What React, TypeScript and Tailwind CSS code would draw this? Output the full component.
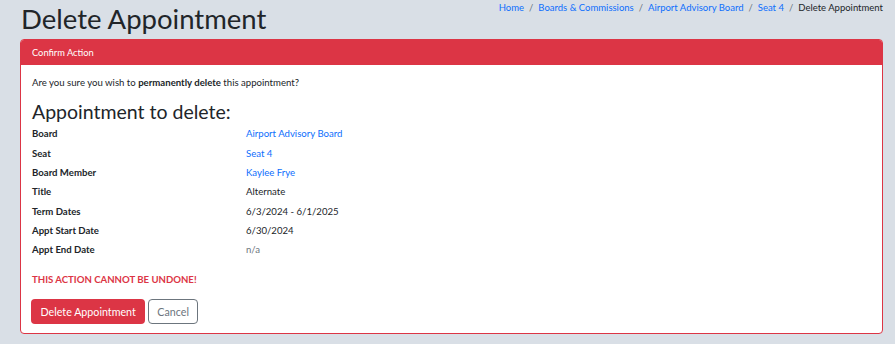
import React from "react";

const rows: { label: string; value: string; link?: boolean; muted?: boolean }[] = [
  { label: "Board", value: "Airport Advisory Board", link: true },
  { label: "Seat", value: "Seat 4", link: true },
  { label: "Board Member", value: "Kaylee Frye", link: true },
  { label: "Title", value: "Alternate" },
  { label: "Term Dates", value: "6/3/2024 - 6/1/2025" },
  { label: "Appt Start Date", value: "6/30/2024" },
  { label: "Appt End Date", value: "n/a", muted: true },
];

export default function App() {
  return (
    <div
      className="min-h-[344px] w-full bg-[#d9dfe6] text-[#212529] pl-[20px] pr-[12px] pb-[10px]"
      style={{ fontFamily: 'Lato, "Open Sans", sans-serif' }}
    >
      <div className="flex items-start justify-between">
        <h1 className="text-[27.5px] leading-[36px] font-normal mt-[1px] ml-[1px]">
          Delete Appointment
        </h1>
        <nav className="flex items-center text-[9.5px] leading-[14px] mt-[1px]">
          <a className="text-[#0d6efd]">Home</a>
          <span className="text-[#6c757d] px-[5px]">/</span>
          <a className="text-[#0d6efd]">Boards &amp; Commissions</a>
          <span className="text-[#6c757d] px-[5px]">/</span>
          <a className="text-[#0d6efd]">Airport Advisory Board</a>
          <span className="text-[#6c757d] px-[5px]">/</span>
          <a className="text-[#0d6efd]">Seat 4</a>
          <span className="text-[#6c757d] px-[5px]">/</span>
          <span className="text-[#212529]">Delete Appointment</span>
        </nav>
      </div>
      <div className="mt-[2px] border border-[#dc3545] rounded-[4px] bg-white overflow-hidden">
        <div className="bg-[#dc3545] text-white text-[9.3px] leading-[14px] px-[11px] h-[25px] flex items-center">
          Confirm Action
        </div>
        <div className="px-[10px] pt-[11px] pb-[9px] text-[9.6px]">
          <p className="leading-[14px] pl-[1px]">
            Are you sure you wish to <b className="font-bold">permanently delete</b> this appointment?
          </p>
          <h2 className="text-[19.5px] leading-[24px] font-normal mt-[10px] pl-[1px]">Appointment to delete:</h2>
          <div className="mt-[1px] pl-[1px]">
            {rows.map((r) => (
              <div key={r.label} className="flex h-[19.33px] items-center">
                <div className="w-[214px] font-bold">{r.label}</div>
                <div
                  className={
                    r.link ? "text-[#0d6efd]" : r.muted ? "text-[#6c757d]" : "text-[#212529]"
                  }
                >
                  {r.value}
                </div>
              </div>
            ))}
          </div>
          <div className="mt-[13px] pl-[1px] text-[#dc3545] font-bold leading-[14px]">
            THIS ACTION CANNOT BE UNDONE!
          </div>
          <div className="flex gap-[3px] mt-[12px]">
            <button className="bg-[#dc3545] text-white text-[10.7px] rounded-[4px] h-[25px] px-[9.5px]">
              Delete Appointment
            </button>
            <button className="border border-[#6c757d] text-[#6c757d] text-[10.7px] rounded-[4px] h-[25px] px-[8px]">
              Cancel
            </button>
          </div>
        </div>
      </div>
    </div>
  );
}
